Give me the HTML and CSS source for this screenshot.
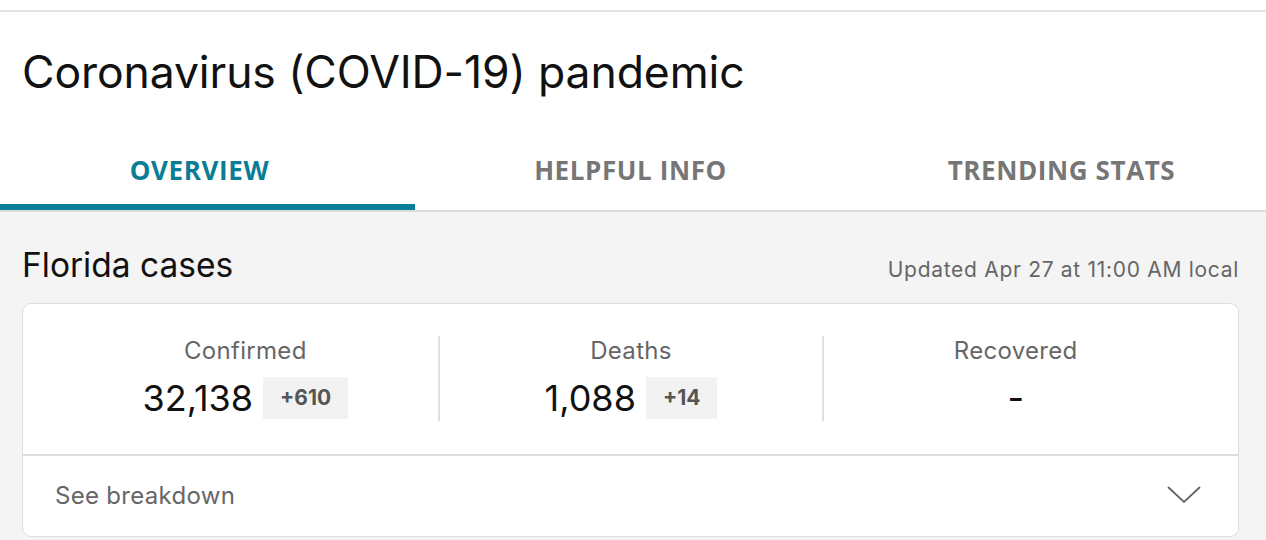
FILE: index.html
```html
<!DOCTYPE html>
<html>
<head>
<meta charset="utf-8">
<link rel="stylesheet" href="styles.css">
</head>
<body>
<div class="page">
  <div class="topline"></div>
  <h1 class="title">Coronavirus (COVID-19) pandemic</h1>
  <nav class="tabs">
    <div class="tab active"><span>OVERVIEW</span></div>
    <div class="tab"><span>HELPFUL INFO</span></div>
    <div class="tab"><span>TRENDING STATS</span></div>
  </nav>
  <section class="content">
    <div class="head">
      <h2 class="region">Florida cases</h2>
      <div class="updated">Updated Apr 27 at 11:00 AM local</div>
    </div>
    <div class="card">
      <div class="stats">
        <div class="stat">
          <div class="label">Confirmed</div>
          <div class="value"><span class="num">32,138</span><span class="delta">+610</span></div>
        </div>
        <div class="stat">
          <div class="label">Deaths</div>
          <div class="value"><span class="num">1,088</span><span class="delta">+14</span></div>
        </div>
        <div class="stat">
          <div class="label">Recovered</div>
          <div class="value"><span class="num">-</span></div>
        </div>
      </div>
      <div class="breakdown">
        <span>See breakdown</span>
        <svg class="chev" width="34" height="18" viewBox="0 0 34 18"><path d="M1 1 L17 16 L33 1" fill="none" stroke="#666" stroke-width="1.8"/></svg>
      </div>
    </div>
  </section>
</div>
</body>
</html>
```
FILE: styles.css
```css
html, body { margin: 0; padding: 0; }
body {
  width: 1266px;
  height: 540px;
  overflow: hidden;
  background: #f4f4f4;
  font-family: Inter, "Liberation Sans", sans-serif;
  color: #111;
}
.page { background: #fff; }
.topline { height: 10px; border-bottom: 2px solid #e3e3e3; }
.title {
  margin: 0;
  padding: 34px 22px 0 22px;
  height: 82px;
  box-sizing: content-box;
  font-weight: 400;
  font-size: 44.5px;
  line-height: 52px;
  letter-spacing: -0.1px;
  color: #111;
}
.tabs {
  display: flex;
  gap: 16px;
  border-bottom: 2px solid #dcdcdc;
  background: #fff;
}
.tab {
  width: 415px;
  flex: none;
  height: 82px;
  padding-right: 16px;
  box-sizing: border-box;
  display: flex;
  align-items: flex-start;
  justify-content: center;
  padding-top: 24px;
  font-family: "Open Sans", "Liberation Sans", sans-serif;
  font-weight: 700;
  font-size: 26px;
  letter-spacing: 0.6px;
  color: #767676;
  border-bottom: 6px solid transparent;
}
.tab.active { color: #0a7d96; border-bottom-color: #0a7d96; }
.content { background: #f4f4f4; padding: 0 27px 0 22px; height: 330px; }
.head {
  display: flex;
  justify-content: space-between;
  align-items: baseline;
  padding-top: 35px;
  height: 58px;
  box-sizing: border-box;
}
.region { margin: 0; font-weight: 400; font-size: 33.5px; line-height: 36px; }
.updated { font-size: 21px; letter-spacing: 0.7px; color: #666; }
.card {
  margin-top: 33px;
  background: #fff;
  border: 1px solid #dedede;
  border-radius: 9px;
  height: 234px;
  box-sizing: border-box;
}
.stats {
  display: grid;
  grid-template-columns: 1fr 1fr 1fr;
  padding: 32px 31px 33px 30px;
  border-bottom: 2px solid #dedede;
}
.stat {
  display: flex;
  flex-direction: column;
  align-items: center;
  height: 85px;
  border-left: 2px solid #e0e0e0;
}
.stat:first-child { border-left: none; }
.label { font-size: 24px; letter-spacing: 0.3px; color: #666; line-height: 30px; }
.value { display: flex; align-items: center; gap: 10px; margin-top: 11px; }
.num { font-size: 36px; line-height: 42px; color: #111; }
.delta {
  background: #f2f2f2;
  font-weight: 700;
  font-size: 21px;
  color: #555;
  height: 42px;
  line-height: 42px;
  padding: 0 17px;
}
.breakdown {
  display: flex;
  justify-content: space-between;
  align-items: center;
  padding: 0 37px 0 32px;
  height: 78px;
  font-size: 24px;
  letter-spacing: 0.3px;
  color: #666;
}
```
